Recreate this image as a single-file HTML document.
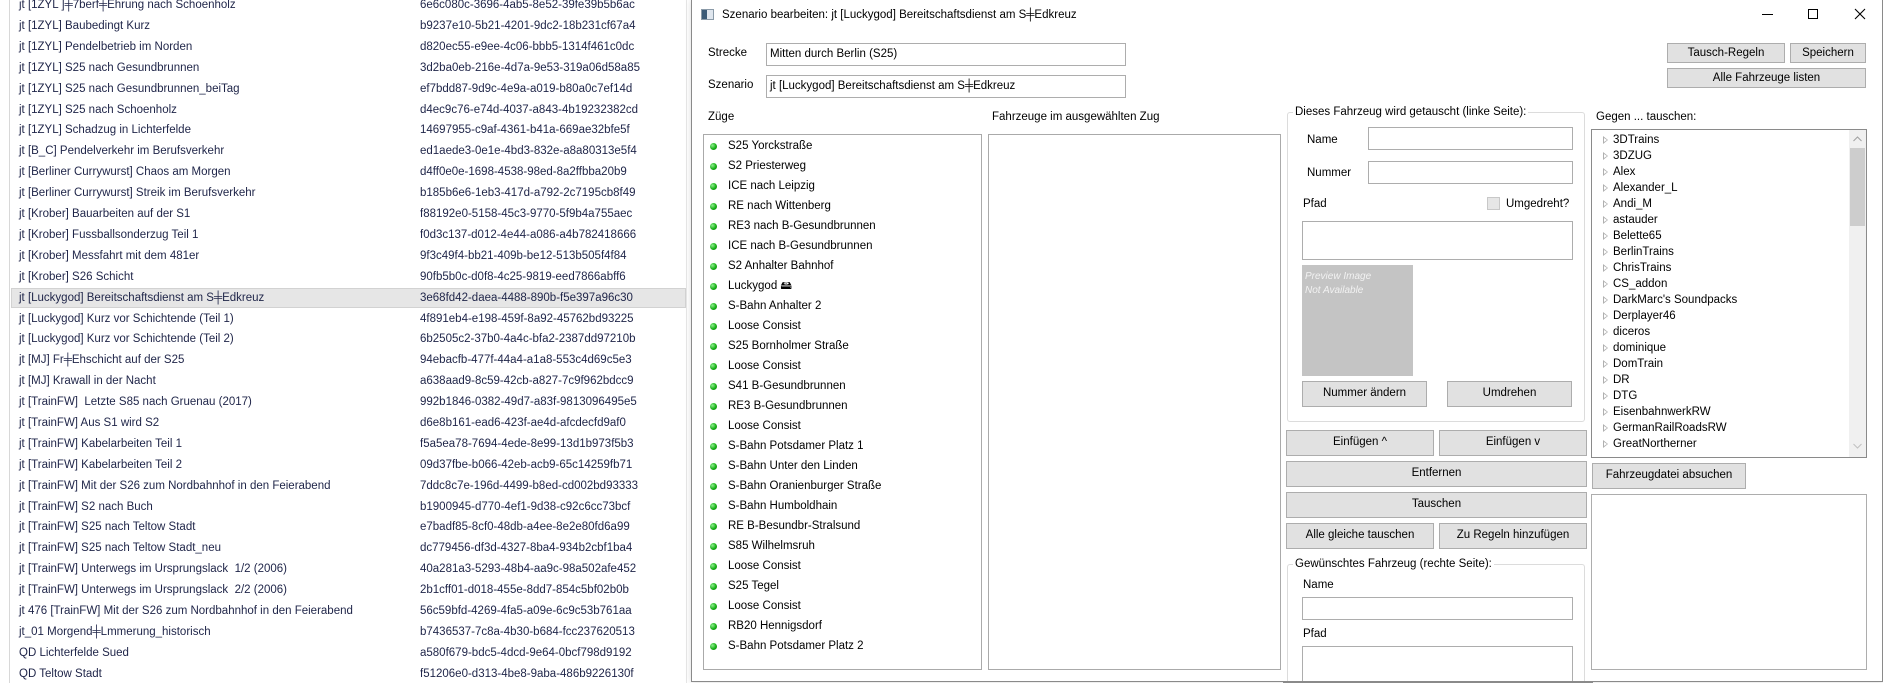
<!DOCTYPE html>
<html style="width:1883px;height:683px;overflow:hidden"><head><meta charset="utf-8"><style>
*{box-sizing:border-box;margin:0;padding:0}
body{width:1883px;height:683px;overflow:hidden;background:#fff;font-family:"Liberation Sans",sans-serif;font-size:11.5px;color:#000;position:relative}
.a{position:absolute;white-space:nowrap}
.lt{position:absolute;left:19px;color:#1e2448;line-height:14px;white-space:nowrap}
.lg{position:absolute;left:420px;color:#1e2448;line-height:14px;white-space:nowrap}
.tb{position:absolute;background:#fff;border:1px solid #adadad}
.bt{position:absolute;background:#e1e1e1;border:1px solid #adadad;text-align:center;line-height:23px}
.it{position:absolute;left:728px;line-height:14px}
.dot{position:absolute;left:710px;width:7px;height:7px;border-radius:50%;background:radial-gradient(circle at 35% 35%,#8ef08e,#19b019 55%,#0a7a0a)}
.tr{position:absolute;left:1613px;line-height:14px}
.ar{position:absolute;left:1603px;width:0;height:0;border-left:5px solid #b0b0b0;border-top:4px solid transparent;border-bottom:4px solid transparent}
.ar:after{content:"";position:absolute;left:-4px;top:-2px;border-left:3px solid #fff;border-top:2px solid transparent;border-bottom:2px solid transparent}
.gb{position:absolute;border:1px solid #dcdcdc;border-radius:3px}
.gl{position:absolute;background:#fff;padding:0 2px;line-height:14px}
</style></head><body>
<!-- left list -->
<div class="a" style="left:9px;top:0;width:677px;height:683px;border-left:1px solid #d8d8d8"></div>
<div class="a" style="left:686px;top:0;width:1px;height:683px;background:#e6e6e6"></div>
<div class="a" style="left:11px;top:288px;width:675px;height:20px;background:#e6e6e6;border:1px solid #d2d2d2"></div>
<div class="lt" style="top:-2px">jt [1ZYL ]╪7berf╪Ehrung nach Schoenholz</div><div class="lg" style="top:-2px">6e6c080c-3696-4ab5-8e52-39fe39b5b6ac</div>
<div class="lt" style="top:19px">jt [1ZYL] Baubedingt Kurz</div><div class="lg" style="top:19px">b9237e10-5b21-4201-9dc2-18b231cf67a4</div>
<div class="lt" style="top:40px">jt [1ZYL] Pendelbetrieb im Norden</div><div class="lg" style="top:40px">d820ec55-e9ee-4c06-bbb5-1314f461c0dc</div>
<div class="lt" style="top:61px">jt [1ZYL] S25 nach Gesundbrunnen</div><div class="lg" style="top:61px">3d2ba0eb-216e-4d7a-9e53-319a06d58a85</div>
<div class="lt" style="top:82px">jt [1ZYL] S25 nach Gesundbrunnen_beiTag</div><div class="lg" style="top:82px">ef7bdd87-9d9c-4e9a-a019-b80a0c7ef14d</div>
<div class="lt" style="top:103px">jt [1ZYL] S25 nach Schoenholz</div><div class="lg" style="top:103px">d4ec9c76-e74d-4037-a843-4b19232382cd</div>
<div class="lt" style="top:123px">jt [1ZYL] Schadzug in Lichterfelde</div><div class="lg" style="top:123px">14697955-c9af-4361-b41a-669ae32bfe5f</div>
<div class="lt" style="top:144px">jt [B_C] Pendelverkehr im Berufsverkehr</div><div class="lg" style="top:144px">ed1aede3-0e1e-4bd3-832e-a8a80313e5f4</div>
<div class="lt" style="top:165px">jt [Berliner Currywurst] Chaos am Morgen</div><div class="lg" style="top:165px">d4ff0e0e-1698-4538-98ed-8a2ffbba20b9</div>
<div class="lt" style="top:186px">jt [Berliner Currywurst] Streik im Berufsverkehr</div><div class="lg" style="top:186px">b185b6e6-1eb3-417d-a792-2c7195cb8f49</div>
<div class="lt" style="top:207px">jt [Krober] Bauarbeiten auf der S1</div><div class="lg" style="top:207px">f88192e0-5158-45c3-9770-5f9b4a755aec</div>
<div class="lt" style="top:228px">jt [Krober] Fussballsonderzug Teil 1</div><div class="lg" style="top:228px">f0d3c137-d012-4e44-a086-a4b782418666</div>
<div class="lt" style="top:249px">jt [Krober] Messfahrt mit dem 481er</div><div class="lg" style="top:249px">9f3c49f4-bb21-409b-be12-513b505f4f84</div>
<div class="lt" style="top:270px">jt [Krober] S26 Schicht</div><div class="lg" style="top:270px">90fb5b0c-d0f8-4c25-9819-eed7866abff6</div>
<div class="lt" style="top:291px">jt [Luckygod] Bereitschaftsdienst am S╪Edkreuz</div><div class="lg" style="top:291px">3e68fd42-daea-4488-890b-f5e397a96c30</div>
<div class="lt" style="top:312px">jt [Luckygod] Kurz vor Schichtende (Teil 1)</div><div class="lg" style="top:312px">4f891eb4-e198-459f-8a92-45762bd93225</div>
<div class="lt" style="top:332px">jt [Luckygod] Kurz vor Schichtende (Teil 2)</div><div class="lg" style="top:332px">6b2505c2-37b0-4a4c-bfa2-2387dd97210b</div>
<div class="lt" style="top:353px">jt [MJ] Fr╪Ehschicht auf der S25</div><div class="lg" style="top:353px">94ebacfb-477f-44a4-a1a8-553c4d69c5e3</div>
<div class="lt" style="top:374px">jt [MJ] Krawall in der Nacht</div><div class="lg" style="top:374px">a638aad9-8c59-42cb-a827-7c9f962bdcc9</div>
<div class="lt" style="top:395px">jt [TrainFW]&nbsp; Letzte S85 nach Gruenau (2017)</div><div class="lg" style="top:395px">992b1846-0382-49d7-a83f-9813096495e5</div>
<div class="lt" style="top:416px">jt [TrainFW] Aus S1 wird S2</div><div class="lg" style="top:416px">d6e8b161-ead6-423f-ae4d-afcdecfd9af0</div>
<div class="lt" style="top:437px">jt [TrainFW] Kabelarbeiten Teil 1</div><div class="lg" style="top:437px">f5a5ea78-7694-4ede-8e99-13d1b973f5b3</div>
<div class="lt" style="top:458px">jt [TrainFW] Kabelarbeiten Teil 2</div><div class="lg" style="top:458px">09d37fbe-b066-42eb-acb9-65c14259fb71</div>
<div class="lt" style="top:479px">jt [TrainFW] Mit der S26 zum Nordbahnhof in den Feierabend</div><div class="lg" style="top:479px">7ddc8c7e-196d-4499-b8ed-cd002bd93333</div>
<div class="lt" style="top:500px">jt [TrainFW] S2 nach Buch</div><div class="lg" style="top:500px">b1900945-d770-4ef1-9d38-c92c6cc73bcf</div>
<div class="lt" style="top:520px">jt [TrainFW] S25 nach Teltow Stadt</div><div class="lg" style="top:520px">e7badf85-8cf0-48db-a4ee-8e2e80fd6a99</div>
<div class="lt" style="top:541px">jt [TrainFW] S25 nach Teltow Stadt_neu</div><div class="lg" style="top:541px">dc779456-df3d-4327-8ba4-934b2cbf1ba4</div>
<div class="lt" style="top:562px">jt [TrainFW] Unterwegs im Ursprungslack&nbsp; 1/2 (2006)</div><div class="lg" style="top:562px">40a281a3-5293-48b4-aa9c-98a502afe452</div>
<div class="lt" style="top:583px">jt [TrainFW] Unterwegs im Ursprungslack&nbsp; 2/2 (2006)</div><div class="lg" style="top:583px">2b1cff01-d018-455e-8dd7-854c5bf02b0b</div>
<div class="lt" style="top:604px">jt 476 [TrainFW] Mit der S26 zum Nordbahnhof in den Feierabend</div><div class="lg" style="top:604px">56c59bfd-4269-4fa5-a09e-6c9c53b761aa</div>
<div class="lt" style="top:625px">jt_01 Morgend╪Lmmerung_historisch</div><div class="lg" style="top:625px">b7436537-7c8a-4b30-b684-fcc237620513</div>
<div class="lt" style="top:646px">QD Lichterfelde Sued</div><div class="lg" style="top:646px">a580f679-bdc5-4dcd-9e64-0bcf798d9192</div>
<div class="lt" style="top:667px">QD Teltow Stadt</div><div class="lg" style="top:667px">f51206e0-d313-4be8-9aba-486b9226130f</div>

<!-- dialog -->
<div class="a" style="left:691px;top:0;width:1192px;height:682px;background:#fff;border:1px solid #8a8a8a;border-top:none;box-shadow:0 0 6px rgba(0,0,0,.15)"></div>
<div class="a" style="left:701px;top:9px;width:13px;height:11px;border:1px solid #8a9aa8;background:linear-gradient(90deg,#3b5b78 0 45%,#dfe6ee 45%)"></div>
<div class="a" style="left:722px;top:8px;line-height:14px">Szenario bearbeiten: jt [Luckygod] Bereitschaftsdienst am S╪Edkreuz</div>
<div class="a" style="left:1762px;top:14px;width:11px;height:1px;background:#000"></div>
<div class="a" style="left:1808px;top:9px;width:10px;height:10px;border:1px solid #000"></div>
<svg class="a" style="left:1854px;top:8px" width="12" height="12"><path d="M1 1L11 11M11 1L1 11" stroke="#000" stroke-width="1.1"/></svg>

<div class="a" style="left:708px;top:46px;line-height:14px">Strecke</div>
<div class="tb" style="left:766px;top:43px;width:360px;height:23px"></div>
<div class="a" style="left:770px;top:47px;line-height:14px">Mitten durch Berlin (S25)</div>
<div class="a" style="left:708px;top:78px;line-height:14px">Szenario</div>
<div class="tb" style="left:766px;top:75px;width:360px;height:23px"></div>
<div class="a" style="left:770px;top:79px;line-height:14px">jt [Luckygod] Bereitschaftsdienst am S╪Edkreuz</div>

<div class="bt" style="left:1667px;top:43px;width:118px;height:20px;line-height:18px">Tausch-Regeln</div>
<div class="bt" style="left:1790px;top:43px;width:76px;height:20px;line-height:18px">Speichern</div>
<div class="bt" style="left:1667px;top:68px;width:199px;height:20px;line-height:18px">Alle Fahrzeuge listen</div>

<div class="a" style="left:708px;top:110px;line-height:14px">Züge</div>
<div class="a" style="left:992px;top:110px;line-height:14px">Fahrzeuge im ausgewählten Zug</div>
<div class="tb" style="left:703px;top:134px;width:279px;height:536px;border-color:#aaa"></div>
<div class="tb" style="left:988px;top:134px;width:293px;height:536px;border-color:#aaa"></div>

<div class="dot" style="top:143px"></div><div class="it" style="top:139px">S25 Yorckstraße</div>
<div class="dot" style="top:163px"></div><div class="it" style="top:159px">S2 Priesterweg</div>
<div class="dot" style="top:183px"></div><div class="it" style="top:179px">ICE nach Leipzig</div>
<div class="dot" style="top:203px"></div><div class="it" style="top:199px">RE nach Wittenberg</div>
<div class="dot" style="top:223px"></div><div class="it" style="top:219px">RE3 nach B-Gesundbrunnen</div>
<div class="dot" style="top:243px"></div><div class="it" style="top:239px">ICE nach B-Gesundbrunnen</div>
<div class="dot" style="top:263px"></div><div class="it" style="top:259px">S2 Anhalter Bahnhof</div>
<div class="dot" style="top:283px"></div><div class="it" style="top:279px">Luckygod &#x1F5B4;</div>
<div class="dot" style="top:303px"></div><div class="it" style="top:299px">S-Bahn Anhalter 2</div>
<div class="dot" style="top:323px"></div><div class="it" style="top:319px">Loose Consist</div>
<div class="dot" style="top:343px"></div><div class="it" style="top:339px">S25 Bornholmer Straße</div>
<div class="dot" style="top:363px"></div><div class="it" style="top:359px">Loose Consist</div>
<div class="dot" style="top:383px"></div><div class="it" style="top:379px">S41 B-Gesundbrunnen</div>
<div class="dot" style="top:403px"></div><div class="it" style="top:399px">RE3 B-Gesundbrunnen</div>
<div class="dot" style="top:423px"></div><div class="it" style="top:419px">Loose Consist</div>
<div class="dot" style="top:443px"></div><div class="it" style="top:439px">S-Bahn Potsdamer Platz 1</div>
<div class="dot" style="top:463px"></div><div class="it" style="top:459px">S-Bahn Unter den Linden</div>
<div class="dot" style="top:483px"></div><div class="it" style="top:479px">S-Bahn Oranienburger Straße</div>
<div class="dot" style="top:503px"></div><div class="it" style="top:499px">S-Bahn Humboldhain</div>
<div class="dot" style="top:523px"></div><div class="it" style="top:519px">RE B-Besundbr-Stralsund</div>
<div class="dot" style="top:543px"></div><div class="it" style="top:539px">S85 Wilhelmsruh</div>
<div class="dot" style="top:563px"></div><div class="it" style="top:559px">Loose Consist</div>
<div class="dot" style="top:583px"></div><div class="it" style="top:579px">S25 Tegel</div>
<div class="dot" style="top:603px"></div><div class="it" style="top:599px">Loose Consist</div>
<div class="dot" style="top:623px"></div><div class="it" style="top:619px">RB20 Hennigsdorf</div>
<div class="dot" style="top:643px"></div><div class="it" style="top:639px">S-Bahn Potsdamer Platz 2</div>

<!-- group 1 -->
<div class="gb" style="left:1287px;top:112px;width:298px;height:310px"></div>
<div class="gl" style="left:1293px;top:105px">Dieses Fahrzeug wird getauscht (linke Seite):</div>
<div class="a" style="left:1307px;top:133px;line-height:14px">Name</div>
<div class="tb" style="left:1368px;top:127px;width:205px;height:23px"></div>
<div class="a" style="left:1307px;top:166px;line-height:14px">Nummer</div>
<div class="tb" style="left:1368px;top:161px;width:205px;height:23px"></div>
<div class="a" style="left:1303px;top:197px;line-height:14px">Pfad</div>
<div class="a" style="left:1487px;top:197px;width:13px;height:13px;background:#e6e6e6;border:1px solid #c8c8c8"></div>
<div class="a" style="left:1506px;top:197px;line-height:14px">Umgedreht?</div>
<div class="tb" style="left:1302px;top:221px;width:271px;height:39px"></div>
<div class="a" style="left:1302px;top:265px;width:111px;height:111px;background:#c4c4c4"></div>
<div class="a" style="left:1305px;top:270px;color:#f2f2f2;font-style:italic;font-size:10px;line-height:14px">Preview Image<br>Not Available</div>
<div class="bt" style="left:1302px;top:381px;width:125px;height:26px">Nummer ändern</div>
<div class="bt" style="left:1447px;top:381px;width:125px;height:26px">Umdrehen</div>

<div class="bt" style="left:1286px;top:430px;width:148px;height:26px">Einfügen ^</div>
<div class="bt" style="left:1439px;top:430px;width:148px;height:26px">Einfügen v</div>
<div class="bt" style="left:1286px;top:461px;width:301px;height:26px">Entfernen</div>
<div class="bt" style="left:1286px;top:492px;width:301px;height:26px">Tauschen</div>
<div class="bt" style="left:1286px;top:523px;width:148px;height:26px">Alle gleiche tauschen</div>
<div class="bt" style="left:1439px;top:523px;width:148px;height:26px">Zu Regeln hinzufügen</div>

<div class="gb" style="left:1287px;top:564px;width:298px;height:119px;border-bottom:none;border-radius:3px 3px 0 0"></div>
<div class="gl" style="left:1293px;top:557px">Gewünschtes Fahrzeug (rechte Seite):</div>
<div class="a" style="left:1303px;top:578px;line-height:14px">Name</div>
<div class="tb" style="left:1302px;top:597px;width:271px;height:23px"></div>
<div class="a" style="left:1303px;top:627px;line-height:14px">Pfad</div>
<div class="tb" style="left:1302px;top:646px;width:271px;height:37px;border-bottom:none"></div>
<div class="a" style="left:1283px;top:681px;width:310px;height:2px;background:#8a8a8a"></div>

<!-- tree -->
<div class="a" style="left:1596px;top:110px;line-height:14px">Gegen ... tauschen:</div>
<div class="tb" style="left:1591px;top:129px;width:276px;height:329px;border-color:#8a8a8a;overflow:hidden">
<div class="a" style="left:257px;top:0;width:17px;height:327px;background:#f0f0f0"></div>
<div class="a" style="left:258px;top:18px;width:15px;height:78px;background:#cdcdcd"></div>
<svg class="a" style="left:261px;top:6px" width="9" height="6"><path d="M0.5 5L4.5 1L8.5 5" stroke="#a0a0a0" fill="none"/></svg>
<svg class="a" style="left:261px;top:313px" width="9" height="6"><path d="M0.5 1L4.5 5L8.5 1" stroke="#c0c0c0" fill="none"/></svg>
</div>
<div class="ar" style="top:136px"></div><div class="tr" style="top:133px">3DTrains</div>
<div class="ar" style="top:152px"></div><div class="tr" style="top:149px">3DZUG</div>
<div class="ar" style="top:168px"></div><div class="tr" style="top:165px">Alex</div>
<div class="ar" style="top:184px"></div><div class="tr" style="top:181px">Alexander_L</div>
<div class="ar" style="top:200px"></div><div class="tr" style="top:197px">Andi_M</div>
<div class="ar" style="top:216px"></div><div class="tr" style="top:213px">astauder</div>
<div class="ar" style="top:232px"></div><div class="tr" style="top:229px">Belette65</div>
<div class="ar" style="top:248px"></div><div class="tr" style="top:245px">BerlinTrains</div>
<div class="ar" style="top:264px"></div><div class="tr" style="top:261px">ChrisTrains</div>
<div class="ar" style="top:280px"></div><div class="tr" style="top:277px">CS_addon</div>
<div class="ar" style="top:296px"></div><div class="tr" style="top:293px">DarkMarc's Soundpacks</div>
<div class="ar" style="top:312px"></div><div class="tr" style="top:309px">Derplayer46</div>
<div class="ar" style="top:328px"></div><div class="tr" style="top:325px">diceros</div>
<div class="ar" style="top:344px"></div><div class="tr" style="top:341px">dominique</div>
<div class="ar" style="top:360px"></div><div class="tr" style="top:357px">DomTrain</div>
<div class="ar" style="top:376px"></div><div class="tr" style="top:373px">DR</div>
<div class="ar" style="top:392px"></div><div class="tr" style="top:389px">DTG</div>
<div class="ar" style="top:408px"></div><div class="tr" style="top:405px">EisenbahnwerkRW</div>
<div class="ar" style="top:424px"></div><div class="tr" style="top:421px">GermanRailRoadsRW</div>
<div class="ar" style="top:440px"></div><div class="tr" style="top:437px">GreatNortherner</div>

<div class="bt" style="left:1592px;top:463px;width:154px;height:26px">Fahrzeugdatei absuchen</div>
<div class="tb" style="left:1591px;top:494px;width:276px;height:176px"></div>
</body></html>
